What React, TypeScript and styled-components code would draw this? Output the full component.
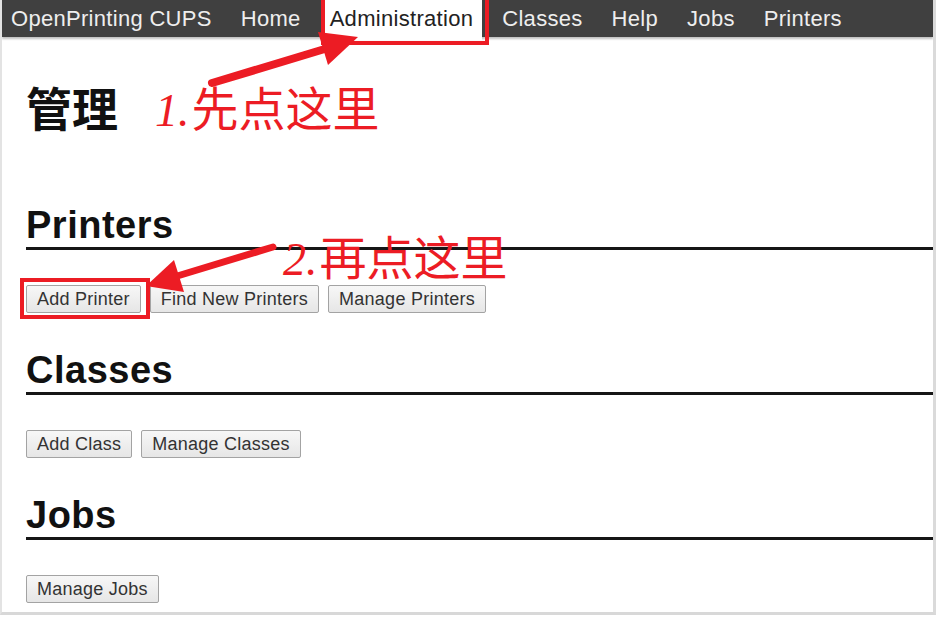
import styled, { createGlobalStyle } from "styled-components";

const GlobalStyle = createGlobalStyle`
  html, body {
    margin: 0;
    padding: 0;
    background: #ffffff;
  }
  body {
    font-family: "Liberation Sans", Arial, sans-serif;
  }
`;

const navItems = ["Home", "Administration", "Classes", "Help", "Jobs", "Printers"];

const sections = [
  { title: "Printers", buttons: ["Add Printer", "Find New Printers", "Manage Printers"] },
  { title: "Classes", buttons: ["Add Class", "Manage Classes"] },
  { title: "Jobs", buttons: ["Manage Jobs"] },
];

const App = () => {
  return (
    <>
      <GlobalStyle />
      <Frame>
        <NavBar>
          <NavLink>OpenPrinting CUPS</NavLink>
          {navItems.map((item) => (
            <NavLink key={item} active={item === "Administration"}>
              {item}
            </NavLink>
          ))}
        </NavBar>
        <Main>
          <PageTitle>管理</PageTitle>
          {sections.map((s) => (
            <Section key={s.title}>
              <SectionTitle>{s.title}</SectionTitle>
              <ButtonRow>
                {s.buttons.map((b) => (
                  <Button key={b}>{b}</Button>
                ))}
              </ButtonRow>
            </Section>
          ))}
        </Main>

        {/* annotations drawn over the page */}
        <Highlight style={{ left: 319, top: -4, width: 168, height: 49 }} />
        <Highlight style={{ left: 18, top: 278, width: 130, height: 41 }} />
        <Arrows width="936" height="615" viewBox="0 0 936 615">
          <line x1="212" y1="83" x2="328" y2="48" stroke="#ec1c24" strokeWidth="8" strokeLinecap="round" />
          <polygon points="358,37 318,32 328,65" fill="#ec1c24" />
          <line x1="273" y1="247" x2="174" y2="277" stroke="#ec1c24" strokeWidth="7" strokeLinecap="round" />
          <polygon points="146,286 174,260 184,292" fill="#ec1c24" />
        </Arrows>
        <Note style={{ left: 153, top: 82 }}>
          <NoteNumber>1.</NoteNumber>先点这里
        </Note>
        <Note style={{ left: 281, top: 231 }}>
          <NoteNumber>2.</NoteNumber>再点这里
        </Note>
      </Frame>
    </>
  );
};

const Frame = styled.div`
  position: relative;
  box-sizing: border-box;
  width: 936px;
  height: 615px;
  border-left: 2px solid #e3e3e3;
  border-right: 3px solid #dadada;
  border-bottom: 3px solid #d8d8d8;
  background: #ffffff;
  overflow: hidden;
`;

const NavBar = styled.nav`
  display: flex;
  flex-direction: row;
  align-items: stretch;
  gap: 11px;
  height: 37px;
  background: #404040;
  box-shadow: 0 2px 2px rgba(0, 0, 0, 0.25);
`;

type NavLinkProps = {
  active?: boolean;
};

const NavLink = styled.div<NavLinkProps>`
  padding: 0 9px;
  font-size: 22px;
  line-height: 37px;
  letter-spacing: 0.3px;
  white-space: nowrap;
  color: ${(p) => (p.active ? "#222222" : "#eeeeee")};
  background: ${(p) => (p.active ? "#ffffff" : "transparent")};
  height: ${(p) => (p.active ? "40px" : "37px")};
`;

const Main = styled.main`
  display: flex;
  flex-direction: column;
  gap: 36px;
  padding: 46px 0 0 24px;
`;

const PageTitle = styled.h1`
  margin: 0 0 39px 0;
  font-family: "Noto Sans CJK SC", sans-serif;
  font-weight: 700;
  font-size: 46px;
  line-height: 46px;
  color: #111111;
`;

const Section = styled.section`
  display: flex;
  flex-direction: column;
  gap: 35px;
`;

const SectionTitle = styled.h2`
  margin: 0;
  font-size: 38px;
  line-height: 43px;
  letter-spacing: 0.5px;
  font-weight: 700;
  color: #111111;
  border-bottom: 3px solid #161616;
`;

const ButtonRow = styled.div`
  display: flex;
  flex-direction: row;
  gap: 9px;
`;

const Button = styled.button`
  box-sizing: border-box;
  height: 28px;
  padding: 0 10px;
  font-family: "Liberation Sans", Arial, sans-serif;
  font-size: 18px;
  letter-spacing: 0.25px;
  color: #333333;
  background: linear-gradient(#f7f7f7, #e6e6e6);
  border: 1px solid #a3a3a3;
  border-radius: 2px;
`;

const Highlight = styled.div`
  position: absolute;
  box-sizing: border-box;
  border: 4px solid #ec1c24;
  pointer-events: none;
`;

const Arrows = styled.svg`
  position: absolute;
  left: -2px;
  top: 0;
  pointer-events: none;
`;

const Note = styled.div`
  position: absolute;
  font-family: "Noto Sans CJK SC", sans-serif;
  font-weight: 400;
  font-size: 47px;
  line-height: 47px;
  color: #ec1c24;
  white-space: nowrap;
`;

const NoteNumber = styled.span`
  font-family: "Liberation Serif", serif;
  font-style: italic;
  font-weight: 300;
  font-size: 46px;
  margin-right: 2px;
`;

export default App;
